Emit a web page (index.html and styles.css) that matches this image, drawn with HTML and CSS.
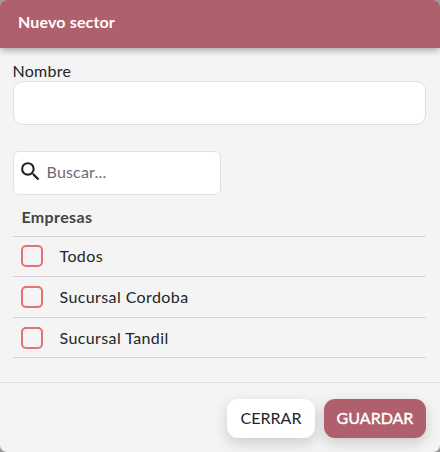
FILE: index.html
```html
<!DOCTYPE html>
<html lang="es">
<head>
  <meta charset="UTF-8">
  <meta name="viewport" content="width=device-width, initial-scale=1.0">
  <title>Nuevo sector</title>
  <link rel="stylesheet" href="styles.css">
</head>
<body>
  <form class="modal">
    <header class="modal-header">
      <h1 class="modal-title">Nuevo sector</h1>
    </header>

    <div class="modal-body">
      <label class="label" for="nombre">Nombre</label>
      <input class="input" id="nombre" type="text">

      <div class="search">
        <svg class="search-icon" viewBox="0 0 24 24" aria-hidden="true">
          <path d="M15.5 14h-.79l-.28-.27A6.471 6.471 0 0 0 16 9.5 6.5 6.5 0 1 0 9.5 16c1.61 0 3.09-.59 4.23-1.57l.27.28v.79l5 4.99L20.49 19l-4.99-5zm-6 0C7.01 14 5 11.99 5 9.5S7.01 5 9.5 5 14 7.01 14 9.5 11.99 14 9.5 14z"/>
        </svg>
        <span class="search-text">Buscar...</span>
      </div>

      <table class="table">
        <thead>
          <tr>
            <th colspan="2">Empresas</th>
          </tr>
        </thead>
        <tbody>
          <tr class="row-short">
            <td class="check-cell"><input class="check" type="checkbox" id="todos"></td>
            <td><label for="todos">Todos</label></td>
          </tr>
          <tr>
            <td class="check-cell"><input class="check" type="checkbox" id="cordoba"></td>
            <td><label for="cordoba">Sucursal Cordoba</label></td>
          </tr>
          <tr class="row-short">
            <td class="check-cell"><input class="check" type="checkbox" id="tandil"></td>
            <td><label for="tandil">Sucursal Tandil</label></td>
          </tr>
        </tbody>
      </table>
    </div>

    <footer class="modal-footer">
      <button class="btn btn-light" type="button">CERRAR</button>
      <button class="btn btn-primary" type="button">GUARDAR</button>
    </footer>
  </form>
</body>
</html>
```

FILE: styles.css
```css
:root {
  --primary: #b0606c;
  --background: #f4f4f4;
  --text: #212529;
  --line: #d3d4d5;
  --check: #e57373;
}

* {
  box-sizing: border-box;
  margin: 0;
  padding: 0;
}

body {
  background-color: #9b9b9b;
  color: var(--text);
  font-family: Lato, 'Open Sans', sans-serif;
  font-size: 16px;
  line-height: 20px;
}

.modal {
  display: flex;
  flex-direction: column;
  height: 452px;
  background-color: var(--background);
  border-radius: 7px;
  overflow: hidden;
}

.modal-header {
  display: flex;
  align-items: center;
  height: 48px;
  padding: 0 18px 4px;
  background-color: var(--primary);
  box-shadow: 0 2px 7px rgba(0, 0, 0, 0.35);
}

.modal-title {
  color: white;
  font-size: 16px;
  font-weight: 700;
  letter-spacing: 0.15px;
}

.modal-body {
  display: flex;
  flex-direction: column;
  height: 334px;
  padding: 13px 14px 0 12.5px;
}

.label {
  height: 20px;
  letter-spacing: 0.25px;
}

.input {
  height: 44px;
  border: 1px solid #dedfe0;
  border-radius: 10px;
  background-color: white;
}

.search {
  display: flex;
  align-items: center;
  width: 208.5px;
  height: 44px;
  margin-top: 26px;
  padding-left: 4px;
  border: 1px solid #e0e1e6;
  border-radius: 6px;
  background-color: white;
  color: #6c6c70;
}

.search-icon {
  width: 25px;
  height: 25px;
  margin: 0 4px 3px 0;
  fill: #212121;
}

.search-text {
  padding-bottom: 2px;
  letter-spacing: 0.2px;
}

.table {
  width: 100%;
  border-collapse: separate;
  border-spacing: 0;
}

.table th,
.table td {
  border-bottom: 1px solid var(--line);
  text-align: left;
  vertical-align: middle;
}

.table th {
  height: 42px;
  padding: 3px 0 0 9px;
  color: #444;
  font-weight: 700;
  letter-spacing: 0.35px;
}

.table td {
  height: 41px;
  padding-bottom: 1px;
  letter-spacing: 0.4px;
}

.table .row-short td {
  height: 40px;
  padding-bottom: 0;
}

.table .row-short:first-child td {
  padding-bottom: 2px;
}

.table .check-cell {
  width: 47px;
  padding-left: 8px;
}

.check {
  display: block;
  width: 22px;
  height: 22px;
  appearance: none;
  border: 2px solid var(--check);
  border-radius: 5px;
}

.modal-footer {
  display: flex;
  justify-content: flex-end;
  gap: 9px;
  flex: 1;
  padding: 16px 14px 0;
  border-top: 1px solid #dee0e5;
}

.btn {
  height: 39px;
  padding-bottom: 3px;
  border: none;
  border-radius: 11px;
  box-shadow: 0 5px 14px rgba(0, 0, 0, 0.17);
  font-family: inherit;
  font-size: 16px;
}

.btn-light {
  width: 88px;
  background-color: white;
  color: var(--text);
}

.btn-primary {
  width: 102px;
  background-color: var(--primary);
  color: white;
  -webkit-text-stroke: 0.4px white;
}
```
